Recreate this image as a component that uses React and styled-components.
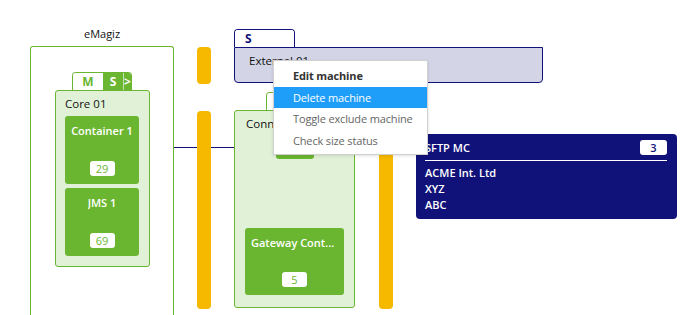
import React from "react";
import styled, { createGlobalStyle } from "styled-components";

const GREEN = "#6bb630";
const LIGHT_GREEN = "#e1f1d8";
const NAVY = "#111279";
const YELLOW = "#f6b900";
const FONT = `"Open Sans", "Noto Sans", sans-serif`;

const Global = createGlobalStyle`
  html, body { margin: 0; padding: 0; background: #fff; }
  body { font-family: ${FONT}; }
`;

const Canvas = styled.div`
  position: relative;
  width: 694px;
  height: 315px;
  overflow: hidden;
  background: #fff;
  font-family: ${FONT};
`;

const Node = styled.div`
  position: absolute;
  left: ${(p) => p.x}px;
  top: ${(p) => p.y}px;
  width: ${(p) => p.w}px;
  ${(p) => (p.h ? `height: ${p.h}px;` : "")}
  display: flex;
  flex-direction: column;
  box-sizing: border-box;
`;

const ZoneLabel = styled.div`
  font-size: 11px;
  color: #111;
  text-align: center;
  height: 14px;
  line-height: 14px;
  margin-bottom: 5px;
`;

const Zone = styled.div`
  flex: 1;
  border: 1px solid ${GREEN};
  border-bottom: none;
  border-radius: 3px 3px 0 0;
`;

const Lane = styled.div`
  position: absolute;
  left: ${(p) => p.x}px;
  top: ${(p) => p.y}px;
  width: 14px;
  height: ${(p) => p.h}px;
  background: ${YELLOW};
  border-radius: 4px;
`;

const Link = styled.div`
  position: absolute;
  left: ${(p) => p.x}px;
  top: ${(p) => p.y}px;
  width: ${(p) => p.w}px;
  height: 1px;
  background: ${NAVY};
`;

const TabRow = styled.div`
  display: flex;
  margin-left: ${(p) => p.offset}px;
  height: 18px;
  box-sizing: border-box;
  border: 1px solid ${(p) => p.color};
  border-bottom: none;
  border-radius: 4px 4px 0 0;
  overflow: hidden;
  align-self: flex-start;
  background: #fff;
`;

const Tab = styled.div`
  width: ${(p) => p.w}px;
  box-sizing: border-box;
  font-size: 12px;
  font-weight: 700;
  line-height: 18px;
  padding-left: ${(p) => p.pl || 0}px;
  text-align: ${(p) => (p.pl ? "left" : "center")};
  color: ${(p) => p.fg};
  background: ${(p) => p.bg};
  ${(p) => (p.divider ? "border-left: 1px solid rgba(255,255,255,0.6);" : "")}
`;

const Machine = styled.div`
  flex: 1;
  background: ${LIGHT_GREEN};
  border: 1px solid ${GREEN};
  border-radius: 3px;
  box-sizing: border-box;
  padding: 0 10px 0 9px;
  display: flex;
  flex-direction: column;
`;

const MachineTitle = styled.div`
  font-size: 11.5px;
  color: #111;
  height: 25px;
  line-height: 25px;
  padding-left: ${(p) => p.indent || 0}px;
  white-space: nowrap;
  overflow: hidden;
`;

const ContainerStack = styled.div`
  display: flex;
  flex-direction: column;
  gap: 4px;
`;

const Card = styled.div`
  height: ${(p) => p.h}px;
  background: ${GREEN};
  border-radius: 3px;
  display: flex;
  flex-direction: column;
  align-items: center;
  justify-content: space-between;
  padding: 7px 6px 8px;
  box-sizing: border-box;
`;

const CardTitle = styled.div`
  color: #fff;
  font-size: 11px;
  font-weight: 600;
  line-height: 15px;
  max-width: 100%;
  white-space: nowrap;
  overflow: hidden;
  text-overflow: ellipsis;
`;

const Badge = styled.div`
  width: ${(p) => p.w || 25}px;
  height: 15px;
  border-radius: 3px;
  background: #fff;
  color: ${(p) => p.color || GREEN};
  font-size: 11px;
  line-height: 15px;
  text-align: center;
`;

const Stub = styled.div`
  position: absolute;
  left: ${(p) => p.x}px;
  top: ${(p) => p.y}px;
  width: ${(p) => p.w}px;
  height: ${(p) => p.h}px;
  background: ${GREEN};
  border-radius: 3px;
`;

const External = styled.div`
  flex: 1;
  background: #d3d5e6;
  border: 1px solid ${NAVY};
  border-radius: 0 0 4px 4px;
  box-sizing: border-box;
  padding-left: 14px;
  font-size: 11.5px;
  color: #111;
  line-height: 25px;
`;

const Info = styled.div`
  position: absolute;
  left: 416px;
  top: 134px;
  width: 261px;
  height: 85px;
  background: ${NAVY};
  border-radius: 4px;
  padding: 5px 10px 0 9px;
  box-sizing: border-box;
  color: #fff;
`;

const InfoHead = styled.div`
  display: flex;
  justify-content: space-between;
  align-items: center;
  height: 16px;
  padding-bottom: 5px;
  border-bottom: 1.5px solid #fff;
  font-size: 11px;
  font-weight: 600;
`;

const InfoBody = styled.div`
  padding-top: 4px;
  display: flex;
  flex-direction: column;
`;

const InfoLine = styled.div`
  font-size: 11px;
  font-weight: 600;
  line-height: 16px;
`;

const Menu = styled.div`
  position: absolute;
  left: 273px;
  top: 60px;
  width: 155px;
  height: 95px;
  box-sizing: border-box;
  padding-top: 4px;
  background: #fff;
  border: 1px solid #d0d0d0;
  box-shadow: 0 1px 3px rgba(0, 0, 0, 0.12);
  z-index: 5;
`;

const MenuItem = styled.div`
  height: 21.5px;
  line-height: 21.5px;
  padding-left: 19px;
  font-size: 11px;
  letter-spacing: -0.15px;
  font-weight: ${(p) => (p.strong ? 700 : 400)};
  color: ${(p) => (p.active ? "#fff" : p.strong ? "#333" : "#666")};
  background: ${(p) => (p.active ? "#1f9ef9" : "transparent")};
  white-space: nowrap;
`;

export default function App() {
  return (
    <>
      <Global />
      <Canvas>
        <Node x={30} y={27} w={144} h={300}>
          <ZoneLabel>eMagiz</ZoneLabel>
          <Zone />
        </Node>

        <Link x={174} y={147} w={60} />

        <Lane x={197} y={47} h={37} />
        <Lane x={197} y={111} h={198} />
        <Lane x={379} y={111} h={198} />

        <Node x={55} y={72} w={95} h={195}>
          <TabRow offset={17} color={GREEN}>
            <Tab w={30} fg={GREEN} bg="#fff">M</Tab>
            <Tab w={20} fg="#fff" bg={GREEN}>S</Tab>
            <Tab w={8} fg="#fff" bg={GREEN} divider>&gt;</Tab>
          </TabRow>
          <Machine>
            <MachineTitle>Core 01</MachineTitle>
            <ContainerStack>
              <Card h={68}>
                <CardTitle>Container 1</CardTitle>
                <Badge>29</Badge>
              </Card>
              <Card h={68}>
                <CardTitle>JMS 1</CardTitle>
                <Badge>69</Badge>
              </Card>
            </ContainerStack>
          </Machine>
        </Node>

        <Node x={234} y={29} w={309} h={54}>
          <TabRow offset={0} color={NAVY}>
            <Tab w={59} pl={10} fg={NAVY} bg="#fff">S</Tab>
          </TabRow>
          <External>External 01</External>
        </Node>

        <Node x={234} y={92} w={121} h={216}>
          <TabRow offset={32} color={GREEN}>
            <Tab w={40} fg={GREEN} bg="#fff">M</Tab>
          </TabRow>
          <Machine>
            <MachineTitle indent={2}>Connector 01</MachineTitle>
          </Machine>
        </Node>
        <Stub x={276} y={138} w={38} h={21} />
        <Node x={245} y={228} w={99} h={67}>
          <Card h={67}>
            <CardTitle>Gateway Container 1</CardTitle>
            <Badge>5</Badge>
          </Card>
        </Node>

        <Info>
          <InfoHead>
            <span>SFTP MC</span>
            <Badge color={NAVY} w={27}>3</Badge>
          </InfoHead>
          <InfoBody>
            <InfoLine>ACME Int. Ltd</InfoLine>
            <InfoLine>XYZ</InfoLine>
            <InfoLine>ABC</InfoLine>
          </InfoBody>
        </Info>

        <Menu>
          <MenuItem strong>Edit machine</MenuItem>
          <MenuItem active>Delete machine</MenuItem>
          <MenuItem>Toggle exclude machine</MenuItem>
          <MenuItem>Check size status</MenuItem>
        </Menu>
      </Canvas>
    </>
  );
}
